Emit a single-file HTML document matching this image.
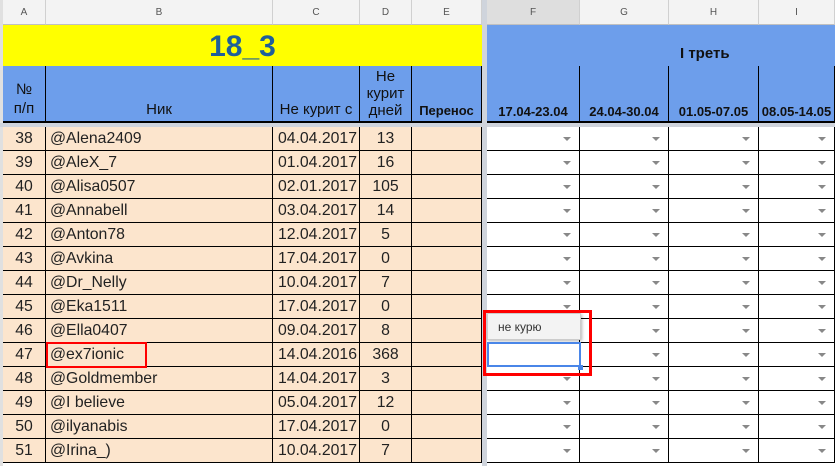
<!DOCTYPE html><html><head><meta charset="utf-8"><style>
body{margin:0;width:835px;height:466px;overflow:hidden;background:#fff;font-family:"Liberation Sans",Arial,sans-serif;position:relative}
.a{position:absolute;box-sizing:border-box}
.ch{top:0;height:25px;background:#f3f3f3;border-right:1px solid #d0d0d0;border-bottom:1px solid #c0c0c0;font-size:10px;color:#555;text-align:center;line-height:25px}
.r{position:absolute;left:3px;height:24px;width:830px}
.c{position:absolute;top:0;height:24px;border-right:1px solid #000;border-bottom:1px solid #000;box-sizing:border-box;font-size:15.8px;line-height:23px;color:#222;background:#fce5cd}
.w{background:#fff}
.dd::after{content:"";position:absolute;right:8px;top:10px;border-left:4px solid transparent;border-right:4px solid transparent;border-top:4px solid #888}
.h{position:absolute;background:#6d9eeb;border-right:1px solid #000;border-bottom:2px solid #000;box-sizing:border-box;font-size:13px;color:#111;text-align:center}
</style></head><body>
<div class="a" style="left:0;top:0;width:3px;height:466px;background:#e0e0e0"></div>
<div class="a ch" style="left:3px;width:43px">A</div>
<div class="a ch" style="left:46px;width:227px">B</div>
<div class="a ch" style="left:273px;width:87px">C</div>
<div class="a ch" style="left:360px;width:52px">D</div>
<div class="a ch" style="left:412px;width:70px">E</div>
<div class="a" style="left:482px;top:0;width:5px;height:466px;background:#cfd4dc"></div>
<div class="a ch" style="left:487px;width:93px;background:#dedede">F</div>
<div class="a ch" style="left:580px;width:89px">G</div>
<div class="a ch" style="left:669px;width:90px">H</div>
<div class="a ch" style="left:759px;width:76px">I</div>
<div class="a" style="left:3px;top:25px;width:479px;height:41px;background:#ffff00;text-align:center;font-size:30px;font-weight:bold;color:#1f5f9a;line-height:44px">18_3</div>
<div class="a" style="left:487px;top:25px;width:348px;height:41px;background:#6d9eeb;font-size:15px;font-weight:bold;color:#111;line-height:58px"><span style="position:absolute;left:193px">I треть</span></div>
<div class="h" style="left:3px;top:66px;width:43px;height:57px;padding-top:14px;font-size:15px;line-height:19px">№<br>п/п</div>
<div class="h" style="left:46px;top:66px;width:227px;height:57px;padding-top:35px;font-size:15px">Ник</div>
<div class="h" style="left:273px;top:66px;width:87px;height:57px;padding-top:35px;font-size:15px">Не курит с</div>
<div class="h" style="left:360px;top:66px;width:52px;height:57px;padding-top:2px;font-size:15px;line-height:17px">Не<br>курит<br>дней</div>
<div class="h" style="left:412px;top:66px;width:70px;height:57px;padding-top:37px;font-weight:bold">Перенос</div>
<div class="h" style="left:487px;top:66px;width:93px;height:57px;padding-top:38px;font-weight:bold">17.04-23.04</div>
<div class="h" style="left:580px;top:66px;width:89px;height:57px;padding-top:38px;font-weight:bold">24.04-30.04</div>
<div class="h" style="left:669px;top:66px;width:90px;height:57px;padding-top:38px;font-weight:bold">01.05-07.05</div>
<div class="h" style="left:759px;top:66px;width:76px;height:57px;padding-top:38px;font-weight:bold">08.05-14.05</div>
<div class="a" style="left:0;top:123px;width:835px;height:4px;background:#cfd4dc"></div>
<div id="rows"></div>
<script>
var d=[["38","@Alena2409","04.04.2017","13"],["39","@AleX_7","01.04.2017","16"],["40","@Alisa0507","02.01.2017","105"],["41","@Annabell","03.04.2017","14"],["42","@Anton78","12.04.2017","5"],["43","@Avkina","17.04.2017","0"],["44","@Dr_Nelly","10.04.2017","7"],["45","@Eka1511","17.04.2017","0"],["46","@Ella0407","09.04.2017","8"],["47","@ex7ionic","14.04.2016","368"],["48","@Goldmember","14.04.2017","3"],["49","@I believe","05.04.2017","12"],["50","@ilyanabis","17.04.2017","0"],["51","@Irina_)","10.04.2017","7"]];
var h="";d.forEach(function(r,k){var t=127+24*k;
h+='<div class="r" style="top:'+t+'px;left:0">'+
'<div class="c" style="left:3px;width:43px;text-align:center">'+r[0]+'</div>'+
'<div class="c" style="left:46px;width:227px;padding-left:4px">'+r[1]+'</div>'+
'<div class="c" style="left:273px;width:87px;text-align:right;padding-right:2px">'+r[2]+'</div>'+
'<div class="c" style="left:360px;width:52px;text-align:center">'+r[3]+'</div>'+
'<div class="c" style="left:412px;width:70px"></div>'+
'<div class="c w dd" style="left:487px;width:93px"></div>'+
'<div class="c w dd" style="left:580px;width:89px"></div>'+
'<div class="c w dd" style="left:669px;width:90px"></div>'+
'<div class="c w dd" style="left:759px;width:76px"></div></div>';});
document.getElementById("rows").innerHTML=h;
</script>
<div class="a" style="left:46px;top:342px;width:101px;height:26px;border:2px solid #f00"></div>
<div class="a" style="left:487px;top:313px;width:94px;height:27px;background:#f3f3f3;border:1px solid #ccc;box-shadow:1px 1px 3px rgba(0,0,0,.3);font-size:12px;color:#333;padding-left:10px;line-height:26px">не курю</div>
<div class="a" style="left:487px;top:342px;width:94px;height:25px;background:#fff;border:2px solid #4a86e8"></div>
<div class="a" style="left:578px;top:365px;width:5px;height:5px;background:#4a86e8"></div>
<div class="a" style="left:483px;top:310px;width:109px;height:66px;border:3px solid #f00"></div>
</body></html>
